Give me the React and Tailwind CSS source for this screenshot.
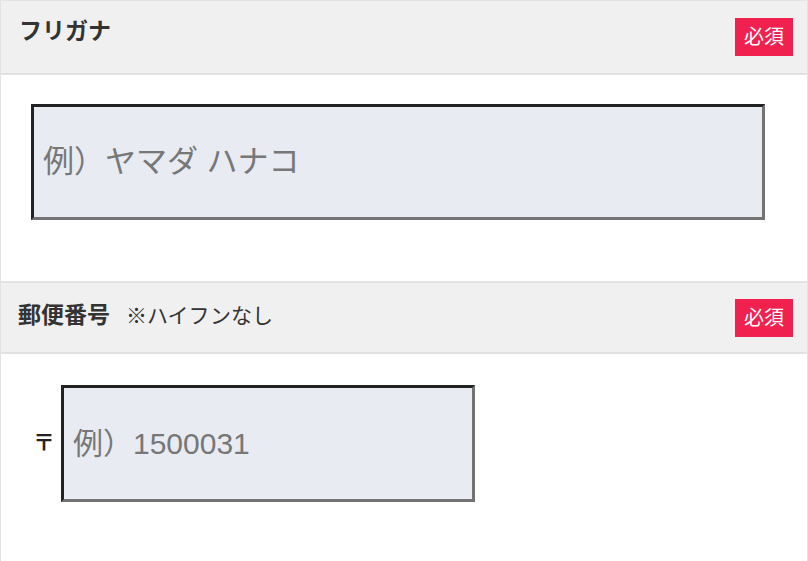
export default function App() {
  const font = { fontFamily: '"Liberation Sans", "Noto Sans CJK JP", sans-serif' };

  return (
    <div className="w-[808px] h-[561px] overflow-hidden bg-white" style={font}>
      <div className="border-l border-r border-t border-[#e3e3e3] h-full">
        {/* フリガナ */}
        <div className="h-[74px] bg-[#f0f0f0] border-b-2 border-[#e2e2e2] flex items-center justify-between pl-[18px] pr-[14px]">
          <span className="text-[23px] font-bold text-[#333] -mt-[11px]">フリガナ</span>
          <span className="bg-[#f0214f] text-white text-[20px] w-[58px] h-[38px] flex items-center justify-center mt-[-1px]">
            必須
          </span>
        </div>
        <div className="h-[206px] pt-[29px] pl-[30px]">
          <input
            type="text"
            placeholder="例）ヤマダ ハナコ"
            className="w-[734px] h-[116px] bg-[#e8ebf2] border-[3px] border-t-[#222] border-l-[#222] border-b-[#737373] border-r-[#737373] px-[9px] text-[31px] text-[#333] placeholder:text-[#777] outline-none"
          />
        </div>

        {/* 郵便番号 */}
        <div className="h-[73px] bg-[#f0f0f0] border-t-2 border-b-2 border-[#e2e2e2] flex items-center justify-between pl-[17px] pr-[14px]">
          <div className="flex items-baseline gap-[16px] -mt-[4px]">
            <span className="text-[23px] font-bold text-[#333]">郵便番号</span>
            <span className="text-[21px] text-[#333]">※ハイフンなし</span>
          </div>
          <span className="bg-[#f0214f] text-white text-[20px] w-[58px] h-[38px] flex items-center justify-center">
            必須
          </span>
        </div>
        <div className="pt-[31px] pl-[32px] flex items-center">
          <span className="text-[22px] font-bold text-[#222] w-[28px] -mt-[2px]">〒</span>
          <input
            type="text"
            placeholder="例）1500031"
            className="w-[414px] h-[117px] bg-[#e8ebf2] border-[3px] border-t-[#222] border-l-[#222] border-b-[#737373] border-r-[#737373] px-[9px] text-[30px] text-[#333] placeholder:text-[#777] outline-none"
          />
        </div>
      </div>
    </div>
  );
}
